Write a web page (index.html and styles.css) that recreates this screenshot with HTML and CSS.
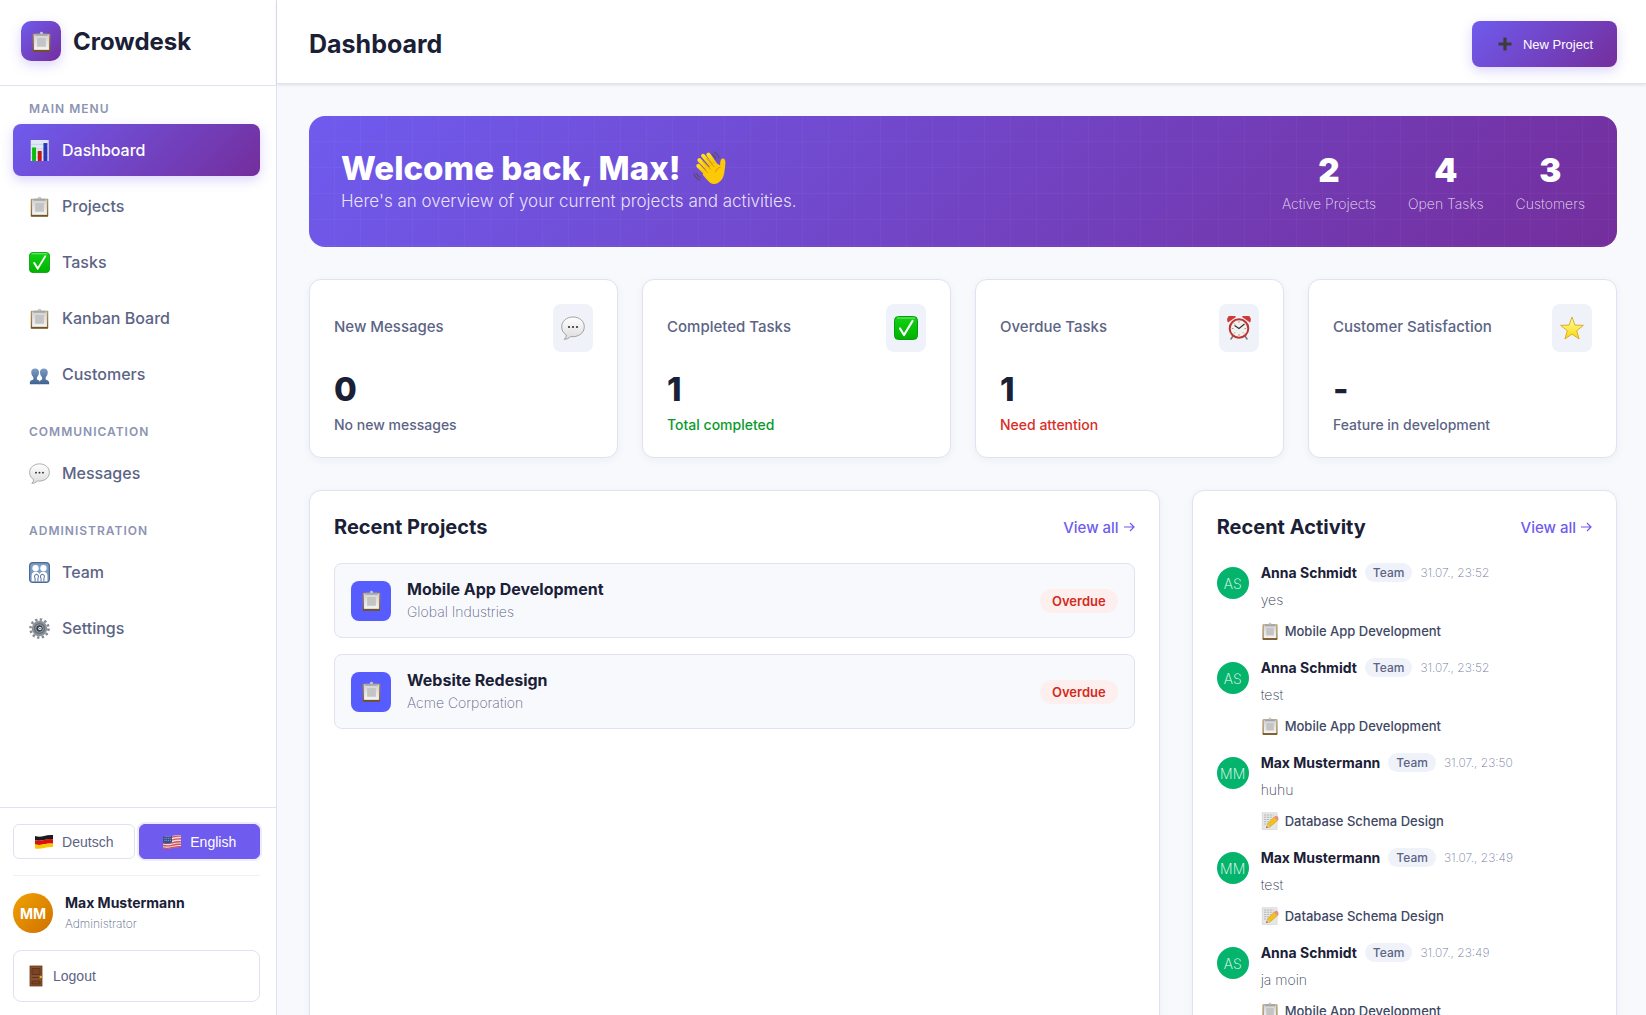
FILE: index.html
```html
<!DOCTYPE html>
<html lang="en">
<head>
    <meta charset="UTF-8"/>
    <meta name="viewport" content="width=device-width, initial-scale=1.0"/>
    <title>Crowdesk - Dashboard</title>
    <link rel="stylesheet" href="styles.css">
</head>
<body>

<!-- Icon sprite -->
<svg class="sprite" aria-hidden="true">
    <defs>
        <linearGradient id="gPaper" x1="0" y1="0" x2="0" y2="1">
            <stop offset="0" stop-color="#d2d2d2"/>
            <stop offset="1" stop-color="#f4f4f4"/>
        </linearGradient>
        <linearGradient id="gBoard" x1="0" y1="0" x2="0" y2="1">
            <stop offset="0" stop-color="#b5975a"/>
            <stop offset="1" stop-color="#83602a"/>
        </linearGradient>
        <linearGradient id="gGreen" x1="0" y1="0" x2="0" y2="1">
            <stop offset="0" stop-color="#12d312"/>
            <stop offset="1" stop-color="#00b200"/>
        </linearGradient>
        <linearGradient id="gPeople" x1="0" y1="0" x2="0" y2="1">
            <stop offset="0" stop-color="#7d9cc6"/>
            <stop offset="1" stop-color="#3f628f"/>
        </linearGradient>
        <linearGradient id="gBubble" x1="0" y1="0" x2="0" y2="1">
            <stop offset="0" stop-color="#ffffff"/>
            <stop offset="1" stop-color="#dcdcdc"/>
        </linearGradient>
        <linearGradient id="gStar" x1="0" y1="0" x2="0" y2="1">
            <stop offset="0" stop-color="#ffffb0"/>
            <stop offset="1" stop-color="#f8d800"/>
        </linearGradient>
        <linearGradient id="gHand" x1="0" y1="0" x2="0" y2="1">
            <stop offset="0" stop-color="#ffe11c"/>
            <stop offset="1" stop-color="#f3b400"/>
        </linearGradient>
    </defs>
    <symbol id="clipboard" viewBox="0 0 24 24">
        <rect x="2" y="3" width="20" height="20.500" rx="1" fill="url(#gBoard)"/>
        <rect x="3.500" y="4" width="17" height="17.500" fill="url(#gPaper)"/>
        <path d="M7 8h10v10H7z" fill="#c4c4c4"/>
        <path d="M5 5.500V4q0-.8.800-.8H10a2 2 0 0 1 4 0h4.200q.800 0 .800.800v1.500z" fill="#a2a5a9"/>
        <circle cx="12" cy="2.300" r="1.500" fill="#c3c9d2"/>
        <path d="M2.500 22.800h19" stroke="#6b4a1c" stroke-width="1.400"/>
    </symbol>
    <symbol id="chart" viewBox="0 0 24 24">
        <rect x="2" y="0" width="20.500" height="24" fill="#dfe8f4"/>
        <path d="M2 5h20M2 10h20M2 15h20M2 20h20M22 0v24" stroke="#b9c4da" stroke-width=".7"/>
        <rect x="3.500" y="8.500" width="4.500" height="15.500" fill="#0bbd0b"/>
        <rect x="10" y="12.500" width="4.500" height="11.500" fill="#c1190f"/>
        <rect x="16.500" y="3.500" width="4.500" height="20.500" fill="#2b35bd"/>
    </symbol>
    <symbol id="check" viewBox="0 0 24 24">
        <rect x=".5" y=".5" width="23" height="23" rx="4" fill="url(#gGreen)" stroke="#0a9a10"/>
        <path d="M3.500 2h17" stroke="#7be87b" stroke-width="1.200" stroke-linecap="round"/>
        <path d="M6 12.500l4 6.500L18.500 5" fill="none" stroke="#fff" stroke-width="2.200" stroke-linecap="round" stroke-linejoin="round"/>
    </symbol>
    <symbol id="people" viewBox="0 0 24 24">
        <path d="M1 23v-2.500q.3-2 4-2.700v-2.300Q2.500 13 2.500 9.500C2.500 6.500 4.300 5 7 5s4.500 1.500 4.500 4.500Q11.500 13 9 15.500v2.300q3.500.7 3.500 2.700V23z" fill="url(#gPeople)"/>
        <path d="M12 23v-2.500q.3-2 3-2.700v-2.300Q12.500 13 12.500 9.500C12.500 6.500 14.300 5 17 5s4.500 1.500 4.500 4.500Q21.500 13 19 15.500v2.300q3.500.7 4 2.700V23z" fill="url(#gPeople)"/>
    </symbol>
    <symbol id="bubble" viewBox="0 0 24 24">
        <path d="M12 1C5.500 1 .7 5.200.7 10.800c0 3.600 1.800 6.400 4.700 8.200-.2 1.700-1 3.200-2.200 4.300 2.600 0 4.700-1 6.200-2.700 8 .9 13.900-3.600 13.900-9.800C23.300 5.200 18.500 1 12 1z" fill="url(#gBubble)" stroke="#999" stroke-width=".9"/>
        <circle cx="8" cy="11" r="1.100" fill="#333"/>
        <circle cx="12" cy="11" r="1.100" fill="#333"/>
        <circle cx="16" cy="11" r="1.100" fill="#333"/>
    </symbol>
    <symbol id="family" viewBox="0 0 24 24">
        <rect x=".7" y=".7" width="22.600" height="22.600" rx="4" fill="#7e9dc4" stroke="#4a6a94" stroke-width="1.400"/>
        <g fill="#fff">
            <circle cx="7.500" cy="7" r="3.600"/>
            <circle cx="16.500" cy="7" r="3.600"/>
            <path d="M3 22v-7q.5-4 4.500-4t4.500 3q.5-3 4.500-3t4.500 4v7z"/>
        </g>
        <path d="M7 22v-3q-2-4 1.500-5 3.500 1 1.700 5v3M13.800 22v-3q-2-4 1.500-5 3.500 1 1.700 5v3" fill="none" stroke="#5c7ca8" stroke-width="1.200"/>
    </symbol>
    <symbol id="gear" viewBox="0 0 24 24">
        <circle cx="12" cy="12" r="10.300" fill="none" stroke="#858b93" stroke-width="3" stroke-dasharray="2.700 2.690"/>
        <circle cx="12" cy="12" r="7.600" fill="#6a6f77" stroke="#8b9199" stroke-width="2.400"/>
        <circle cx="12" cy="12" r="4.300" fill="#363a41" stroke="#a3abb6" stroke-width="1"/>
        <circle cx="12.500" cy="12" r="2" fill="#e3edf8"/>
        <circle cx="12.500" cy="12" r=".8" fill="#2f4c67"/>
    </symbol>
    <symbol id="clock" viewBox="0 0 24 24">
        <path d="M6 20l-2 3M18 20l2 3" stroke="#777" stroke-width="1.500" stroke-linecap="round"/>
        <path d="M1 6.500a4.500 4.500 0 0 1 8-5.500zM23 6.500a4.500 4.500 0 0 0-8-5.500z" fill="#cf3a38"/>
        <circle cx="12" cy="12.500" r="9.300" fill="#f3f1ed" stroke="#bd3531" stroke-width="2"/>
        <path d="M12 5v1.800M12 18v2M4.800 12.500h1.700M17.500 12.500h1.700M7 7.500l1.200 1.200M17 17.500l-1.200-1.200M7 17.500l1.200-1.200" stroke="#888" stroke-width=".8"/>
        <path d="M7.500 9.500l4.500 3 5.500-4.500" fill="none" stroke="#333" stroke-width="1.200"/>
    </symbol>
    <symbol id="star" viewBox="0 0 24 24">
        <path d="M12 1l2.900 8.100 8.500.3-6.700 5.300 2.400 8.300-7.100-4.900L4.900 23l2.400-8.300L.6 9.400l8.500-.3z" fill="url(#gStar)" stroke="#dba520" stroke-width=".9" stroke-linejoin="round"/>
    </symbol>
    <symbol id="memo" viewBox="0 0 24 24">
        <rect x="1.500" y="1" width="20" height="22.500" fill="#e6e6e6" stroke="#d0d0d0" stroke-width=".7"/>
        <path d="M4 4h13M4 7h12M4 10h10M4 13h7M4 16h5" stroke="#aaa" stroke-width="1" stroke-dasharray="3 1"/>
        <path d="M7 21l1.800-5L17.500 6.500l4.500 4.700-10 8.800z" fill="#f2c21b" stroke="#b98510" stroke-width=".6"/>
        <path d="M7 21l1.800-5 3.200 4z" fill="#e8c390"/>
        <path d="M17.500 6.500l1.700-1.300q3-.7 4 2.500l.1 1.800L22 11.200z" fill="#ea8a8d"/>
        <path d="M7 21l.8-2 1.200 1.300z" fill="#333"/>
    </symbol>
    <symbol id="hand" viewBox="0 0 32 32">
        <g fill="none" stroke="url(#gHand)" stroke-width="3.800" stroke-linecap="round">
            <path d="M5 14l9 9"/>
            <path d="M6 8.500L17 20"/>
            <path d="M9.500 4.500L20 17"/>
            <path d="M14.500 3.500L22 14"/>
        </g>
        <path d="M11 18L21 11l4.500 2.500q0-6 2-6.500 3-.5 3 4-.2 3.500-1 9-.8 7-6 10-4 2.500-8-.7Q13 27 9 22z" fill="#fbc908"/>
        <path d="M7 13.500l7 7M9 9.500l8 8M12.500 6.500l7.500 8.500M21 20q1-4 5-5" fill="none" stroke="#d79100" stroke-width=".8"/>
        <path d="M20 1q3.500 1.500 4.500 5.500M18.500 3q2.500 1.500 3 4.500M.8 21.500q1.500 4 5.500 6M3 21q1.500 2.500 4 4" fill="none" stroke="#55515c" stroke-width="1.100" stroke-linecap="round"/>
    </symbol>
    <symbol id="plus" viewBox="0 0 18 18">
        <path d="M9 2.500v13M2.500 9h13" stroke="#3c3c3c" stroke-width="3.200"/>
    </symbol>
    <symbol id="door" viewBox="0 0 14 22">
        <rect x="1" y="1" width="12" height="20" fill="#87502e" stroke="#653a1f" stroke-width=".8"/>
        <path d="M3 3.500h8v6H3zM3 12.500h7M3 16h8v3H3z" fill="#7a4424" stroke="#5d3319" stroke-width=".9"/>
        <circle cx="11.800" cy="12" r="1.200" fill="#e4b82c"/>
    </symbol>
    <symbol id="flagDe" viewBox="0 0 20 16">
        <path d="M1 2q4.500 1.500 9 0t9-1v4.300q-4.500-.5-9 .7t-9 .3z" fill="#1b1b1b"/>
        <path d="M1 6.300q4.500 1 9-.3t9-.7v4.400q-4.500-.5-9 .6T1 10.500z" fill="#dd1010"/>
        <path d="M1 10.500q4.500 1 9-.2t9-.6V13q-4.500-.3-9 1t-9 .5z" fill="#f8c800"/>
    </symbol>
    <symbol id="flagUs" viewBox="0 0 20 16">
        <path d="M1 2q4.500 1.500 9 0t9-1v12q-4.500-.3-9 1t-9 .5z" fill="#f0dfe1"/>
        <path d="M1 3.200q4.500 1.500 9 0t9-1M1 6q4.500 1.300 9 0t9-1M1 8.800q4.500 1.200 9 0t9-1M1 11.500q4.500 1 9-.2t9-1M1 14q4.500.8 9-.4t9-1" fill="none" stroke="#d0505a" stroke-width="1.300"/>
        <path d="M1 2q4.500 1.400 9 0v6.600q-4.500 1.300-9 .6z" fill="#3c5290"/>
        <path d="M2.500 4.500h7M2.500 6.500h7" stroke="#b8c3e2" stroke-width=".7" stroke-dasharray=".8 1"/>
    </symbol>
</svg>

<div class="container">
    <aside class="sidebar">
        <div class="sidebar-header">
            <div class="logo"><svg class="icon"><use href="#clipboard"/></svg></div>
            <span class="brand">Crowdesk</span>
        </div>

        <nav class="nav">
            <div class="nav-section">
                <div class="nav-title">MAIN MENU</div>
                <a class="nav-item active" href="#"><svg class="icon"><use href="#chart"/></svg>Dashboard</a>
                <a class="nav-item" href="#"><svg class="icon"><use href="#clipboard"/></svg>Projects</a>
                <a class="nav-item" href="#"><svg class="icon"><use href="#check"/></svg>Tasks</a>
                <a class="nav-item" href="#"><svg class="icon"><use href="#clipboard"/></svg>Kanban Board</a>
                <a class="nav-item" href="#"><svg class="icon"><use href="#people"/></svg>Customers</a>
            </div>
            <div class="nav-section">
                <div class="nav-title">COMMUNICATION</div>
                <a class="nav-item" href="#"><svg class="icon"><use href="#bubble"/></svg>Messages</a>
            </div>
            <div class="nav-section">
                <div class="nav-title">ADMINISTRATION</div>
                <a class="nav-item" href="#"><svg class="icon"><use href="#family"/></svg>Team</a>
                <a class="nav-item" href="#"><svg class="icon"><use href="#gear"/></svg>Settings</a>
            </div>
        </nav>

        <div class="sidebar-footer">
            <div class="language">
                <button class="lang-btn" type="button"><svg class="flag"><use href="#flagDe"/></svg>Deutsch</button>
                <button class="lang-btn active" type="button"><svg class="flag"><use href="#flagUs"/></svg>English</button>
            </div>
            <div class="user">
                <div class="user-avatar">MM</div>
                <div>
                    <div class="user-name">Max Mustermann</div>
                    <div class="user-role">Administrator</div>
                </div>
            </div>
            <button class="logout" type="button"><svg class="door"><use href="#door"/></svg>Logout</button>
        </div>
    </aside>

    <div class="main">
        <header class="topbar">
            <h1>Dashboard</h1>
            <button class="btn-primary" type="button"><svg class="plus"><use href="#plus"/></svg>New Project</button>
        </header>

        <main class="content">
            <section class="welcome">
                <div>
                    <h2>Welcome back, Max! <svg class="wave"><use href="#hand"/></svg></h2>
                    <p>Here's an overview of your current projects and activities.</p>
                </div>
                <div class="welcome-stats">
                    <div class="welcome-stat"><strong>2</strong><span>Active Projects</span></div>
                    <div class="welcome-stat"><strong>4</strong><span>Open Tasks</span></div>
                    <div class="welcome-stat"><strong>3</strong><span>Customers</span></div>
                </div>
            </section>

            <section class="stats">
                <div class="card stat">
                    <div class="stat-header">
                        <span class="stat-title">New Messages</span>
                        <div class="stat-icon"><svg class="icon"><use href="#bubble"/></svg></div>
                    </div>
                    <div class="stat-value">0</div>
                    <div class="stat-note">No new messages</div>
                </div>
                <div class="card stat">
                    <div class="stat-header">
                        <span class="stat-title">Completed Tasks</span>
                        <div class="stat-icon"><svg class="icon"><use href="#check"/></svg></div>
                    </div>
                    <div class="stat-value">1</div>
                    <div class="stat-note positive">Total completed</div>
                </div>
                <div class="card stat">
                    <div class="stat-header">
                        <span class="stat-title">Overdue Tasks</span>
                        <div class="stat-icon"><svg class="icon"><use href="#clock"/></svg></div>
                    </div>
                    <div class="stat-value">1</div>
                    <div class="stat-note negative">Need attention</div>
                </div>
                <div class="card stat">
                    <div class="stat-header">
                        <span class="stat-title">Customer Satisfaction</span>
                        <div class="stat-icon"><svg class="icon"><use href="#star"/></svg></div>
                    </div>
                    <div class="stat-value">-</div>
                    <div class="stat-note">Feature in development</div>
                </div>
            </section>

            <div class="panels">
                <section class="card">
                    <div class="card-header">
                        <h3>Recent Projects</h3>
                        <a href="#">View all <svg class="arrow" viewBox="0 0 12 12"><path d="M1 6h10M7 2l4 4-4 4"/></svg></a>
                    </div>
                    <div class="project">
                        <div class="project-icon"><svg class="icon"><use href="#clipboard"/></svg></div>
                        <div class="project-info">
                            <div class="project-name">Mobile App Development</div>
                            <div class="project-client">Global Industries</div>
                        </div>
                        <span class="status">Overdue</span>
                    </div>
                    <div class="project">
                        <div class="project-icon"><svg class="icon"><use href="#clipboard"/></svg></div>
                        <div class="project-info">
                            <div class="project-name">Website Redesign</div>
                            <div class="project-client">Acme Corporation</div>
                        </div>
                        <span class="status">Overdue</span>
                    </div>
                </section>

                <section class="card">
                    <div class="card-header">
                        <h3>Recent Activity</h3>
                        <a href="#">View all <svg class="arrow" viewBox="0 0 12 12"><path d="M1 6h10M7 2l4 4-4 4"/></svg></a>
                    </div>
                    <div class="activity">
                        <div class="activity-avatar">AS</div>
                        <div>
                            <div class="activity-head"><strong>Anna Schmidt</strong><span class="tag">Team</span><time>31.07., 23:52</time></div>
                            <div class="activity-text">yes</div>
                            <div class="activity-ref"><svg class="icon"><use href="#clipboard"/></svg>Mobile App Development</div>
                        </div>
                    </div>
                    <div class="activity">
                        <div class="activity-avatar">AS</div>
                        <div>
                            <div class="activity-head"><strong>Anna Schmidt</strong><span class="tag">Team</span><time>31.07., 23:52</time></div>
                            <div class="activity-text">test</div>
                            <div class="activity-ref"><svg class="icon"><use href="#clipboard"/></svg>Mobile App Development</div>
                        </div>
                    </div>
                    <div class="activity">
                        <div class="activity-avatar">MM</div>
                        <div>
                            <div class="activity-head"><strong>Max Mustermann</strong><span class="tag">Team</span><time>31.07., 23:50</time></div>
                            <div class="activity-text">huhu</div>
                            <div class="activity-ref"><svg class="icon"><use href="#memo"/></svg>Database Schema Design</div>
                        </div>
                    </div>
                    <div class="activity">
                        <div class="activity-avatar">MM</div>
                        <div>
                            <div class="activity-head"><strong>Max Mustermann</strong><span class="tag">Team</span><time>31.07., 23:49</time></div>
                            <div class="activity-text">test</div>
                            <div class="activity-ref"><svg class="icon"><use href="#memo"/></svg>Database Schema Design</div>
                        </div>
                    </div>
                    <div class="activity">
                        <div class="activity-avatar">AS</div>
                        <div>
                            <div class="activity-head"><strong>Anna Schmidt</strong><span class="tag">Team</span><time>31.07., 23:49</time></div>
                            <div class="activity-text">ja moin</div>
                            <div class="activity-ref"><svg class="icon"><use href="#clipboard"/></svg>Mobile App Development</div>
                        </div>
                    </div>
                </section>
            </div>
        </main>
    </div>
</div>

</body>
</html>
```
FILE: styles.css
```css
* {
    box-sizing: border-box;
}

body {
    margin: 0;
    font-family: Inter, "Open Sans", sans-serif;
    font-weight: 200;
    font-size: 14px;
    color: #1a2036;
    background: #f8f9fd;
}

h1, h2, h3, p {
    margin: 0;
}

a {
    text-decoration: none;
}

button {
    font-family: "Liberation Sans", Arial, sans-serif;
    cursor: pointer;
}

.sprite {
    position: absolute;
    width: 0;
    height: 0;
}

.icon {
    width: 21px;
    height: 21px;
    flex: none;
}

.container {
    display: flex;
    height: 100vh;
}

/* Sidebar */
.sidebar {
    width: 277px;
    flex: none;
    display: flex;
    flex-direction: column;
    background: #fff;
    border-right: 1px solid #dfe2f0;
}

.sidebar-header {
    display: flex;
    align-items: center;
    gap: 12px;
    padding: 21px 21px 24px;
    border-bottom: 1px solid #dfe2f0;
}

.logo {
    display: flex;
    align-items: center;
    justify-content: center;
    width: 40px;
    height: 40px;
    border-radius: 10px;
    background: linear-gradient(135deg, #6f5bee, #742e9c);
    box-shadow: 0 4px 12px rgba(111, 91, 238, 0.25);
}

.brand {
    font-size: 24px;
    font-weight: 700;
}

.nav {
    flex: 1;
    overflow-y: auto;
    scrollbar-width: none;
    padding: 14px 16px 0 13px;
}

.nav-section {
    margin-bottom: 23px;
}

.nav-title {
    padding-left: 16px;
    margin-bottom: 6px;
    font-size: 12px;
    line-height: 18px;
    font-weight: 600;
    letter-spacing: 1px;
    color: #8c94b3;
}

.nav-item {
    display: flex;
    align-items: center;
    gap: 12px;
    height: 52px;
    padding: 0 16px;
    border-radius: 8px;
    font-size: 16px;
    font-weight: 500;
    color: #5c6485;
}

.nav-item + .nav-item {
    margin-top: 4px;
}

.nav-item.active {
    color: #fff;
    background: linear-gradient(135deg, #6f5bee, #742e9c);
    box-shadow: 0 4px 12px rgba(111, 91, 238, 0.25);
}

.sidebar-footer {
    padding: 16px 16px 13px 13px;
    border-top: 1px solid #dfe2f0;
}

.language {
    display: flex;
    gap: 4px;
    padding-bottom: 16px;
    border-bottom: 1px solid #eef0f8;
}

.lang-btn {
    display: flex;
    flex: 1;
    align-items: center;
    justify-content: center;
    gap: 8px;
    height: 35px;
    padding: 0;
    border: 1px solid #dfe2f0;
    border-radius: 6px;
    font-size: 14px;
    color: #5c6485;
    background: #fff;
}

.lang-btn.active {
    color: #fff;
    background: #6f5bee;
    border-color: #6f5bee;
    box-shadow: 0 0 0 2px rgba(111, 91, 238, 0.12);
}

.flag {
    width: 20px;
    height: 16px;
}

.user {
    display: flex;
    align-items: center;
    gap: 12px;
    height: 42px;
    margin: 16px 0;
}

.user-avatar {
    display: flex;
    align-items: center;
    justify-content: center;
    width: 40px;
    height: 40px;
    border-radius: 50%;
    font-weight: 700;
    color: #fff;
    background: linear-gradient(135deg, #f0a202, #cf7000);
}

.user-name {
    line-height: 22px;
    font-weight: 700;
}

.user-role {
    font-size: 12px;
    line-height: 20px;
    color: #5c6485;
}

.logout {
    display: flex;
    align-items: center;
    gap: 10px;
    width: 100%;
    height: 52px;
    padding: 0 15px;
    border: 1px solid #dfe2f0;
    border-radius: 8px;
    font-size: 14px;
    color: #5c6485;
    background: #fff;
}

.door {
    width: 14px;
    height: 22px;
}

/* Main area */
.main {
    flex: 1;
    min-width: 0;
    display: flex;
    flex-direction: column;
}

.topbar {
    display: flex;
    align-items: flex-start;
    justify-content: space-between;
    padding: 21px 29px 16px 32px;
    background: #fff;
    border-bottom: 1px solid #dfe2f0;
    box-shadow: 0 1px 3px rgba(20, 30, 60, 0.12);
}

.topbar h1 {
    font-size: 25px;
    line-height: 46px;
    font-weight: 700;
}

.btn-primary {
    display: flex;
    align-items: center;
    gap: 9px;
    height: 46px;
    padding: 0 24px;
    border: none;
    border-radius: 8px;
    font-size: 13px;
    color: #fff;
    background: linear-gradient(135deg, #6f5bee, #742e9c);
    box-shadow: 0 4px 12px rgba(111, 91, 238, 0.25);
}

.plus {
    width: 18px;
    height: 18px;
}

.content {
    flex: 1;
    overflow-y: auto;
    scrollbar-width: none;
    padding: 32px 29px 32px 32px;
}

.welcome {
    display: flex;
    align-items: center;
    justify-content: space-between;
    padding: 32px;
    margin-bottom: 32px;
    border-radius: 16px;
    color: #fff;
    background:
        repeating-linear-gradient(90deg, transparent 0 25px, rgba(255, 255, 255, 0.03) 25px 26px),
        repeating-linear-gradient(180deg, transparent 0 25px, rgba(255, 255, 255, 0.03) 25px 26px),
        linear-gradient(135deg, #6f5bee, #742e9c);
}

.welcome h2 {
    display: flex;
    align-items: center;
    gap: 12px;
    font-size: 33px;
    line-height: 40px;
    font-weight: 800;
}

.wave {
    width: 34px;
    height: 34px;
}

.welcome p {
    font-size: 17px;
    line-height: 27px;
    font-weight: 300;
    color: rgba(255, 255, 255, 0.85);
}

.welcome-stats {
    display: flex;
    gap: 32px;
    text-align: center;
}

.welcome-stat strong {
    display: block;
    font-size: 33px;
    line-height: 45px;
    font-weight: 900;
}

.welcome-stat span {
    display: block;
    font-size: 14px;
    line-height: 22px;
    color: rgba(255, 255, 255, 0.85);
}

.card {
    padding: 24px;
    border: 1px solid #dfe2f0;
    border-radius: 12px;
    background: #fff;
    box-shadow: 0 2px 8px rgba(20, 30, 60, 0.05);
}

.stats {
    display: grid;
    grid-template-columns: repeat(4, 1fr);
    gap: 24px;
    margin-bottom: 32px;
}

.stat-header {
    display: flex;
    justify-content: space-between;
    margin-bottom: 15px;
}

.stat-title {
    font-size: 15px;
    line-height: 45px;
    font-weight: 500;
    color: #5c6485;
}

.stat-icon {
    display: flex;
    align-items: center;
    justify-content: center;
    width: 40px;
    height: 48px;
    border-radius: 8px;
    background: #eff2f9;
}

.stat-icon .icon {
    width: 24px;
    height: 24px;
}

.stat-value {
    font-size: 33px;
    line-height: 44px;
    font-weight: 800;
}

.stat-note {
    margin-top: 6px;
    font-size: 14px;
    line-height: 16px;
    font-weight: 500;
    color: #5c6485;
}

.stat-note.positive {
    color: #0a9a2c;
}

.stat-note.negative {
    color: #d92d27;
}

.panels {
    display: grid;
    grid-template-columns: 2fr 1fr;
    gap: 32px;
}

.card-header {
    display: flex;
    align-items: center;
    justify-content: space-between;
    margin-bottom: 24px;
}

.card-header h3 {
    font-size: 20px;
    line-height: 24px;
    font-weight: 700;
}

.card-header a {
    display: flex;
    align-items: center;
    gap: 4px;
    font-size: 15px;
    font-weight: 500;
    color: #6f5bee;
}

.arrow {
    width: 12px;
    height: 12px;
    fill: none;
    stroke: currentColor;
    stroke-width: 1.2;
}

.project {
    display: flex;
    align-items: center;
    gap: 16px;
    height: 75px;
    padding: 0 16px;
    margin-bottom: 16px;
    border: 1px solid #dfe2f0;
    border-radius: 8px;
    background: #f8f9fd;
}

.project-icon {
    display: flex;
    align-items: center;
    justify-content: center;
    width: 40px;
    height: 40px;
    border-radius: 8px;
    background: #575cff;
}

.project-info {
    flex: 1;
    padding-bottom: 2px;
}

.project-name {
    font-size: 16px;
    line-height: 24px;
    font-weight: 700;
}

.project-client {
    font-size: 14px;
    line-height: 21px;
    color: #5c6485;
}

.status {
    padding: 0 12px;
    border-radius: 12px;
    font-size: 13px;
    line-height: 24px;
    font-weight: 600;
    color: #d42a20;
    background: #feefef;
}

.activity {
    display: flex;
    gap: 12px;
    padding-bottom: 17px;
}

.activity-avatar {
    display: flex;
    align-items: center;
    justify-content: center;
    flex: none;
    width: 32px;
    height: 32px;
    margin-top: 4px;
    border-radius: 50%;
    color: #fff;
    background: #04b46d;
}

.activity-head {
    display: flex;
    align-items: center;
    gap: 8px;
    height: 19px;
}

.activity-head strong {
    font-weight: 700;
}

.tag {
    padding: 0 8px;
    border-radius: 10px;
    font-size: 12px;
    line-height: 19px;
    font-weight: 500;
    color: #5c6485;
    background: #eff2f9;
}

.activity-head time {
    font-size: 12px;
    color: #767e9e;
}

.activity-text {
    margin: 8px 0 10px;
    line-height: 20px;
    color: #363d57;
}

.activity-ref {
    display: flex;
    align-items: center;
    gap: 6px;
    height: 21px;
    font-size: 13px;
    font-weight: 500;
    color: #404763;
}

.activity-ref .icon {
    width: 18px;
    height: 18px;
}
```
